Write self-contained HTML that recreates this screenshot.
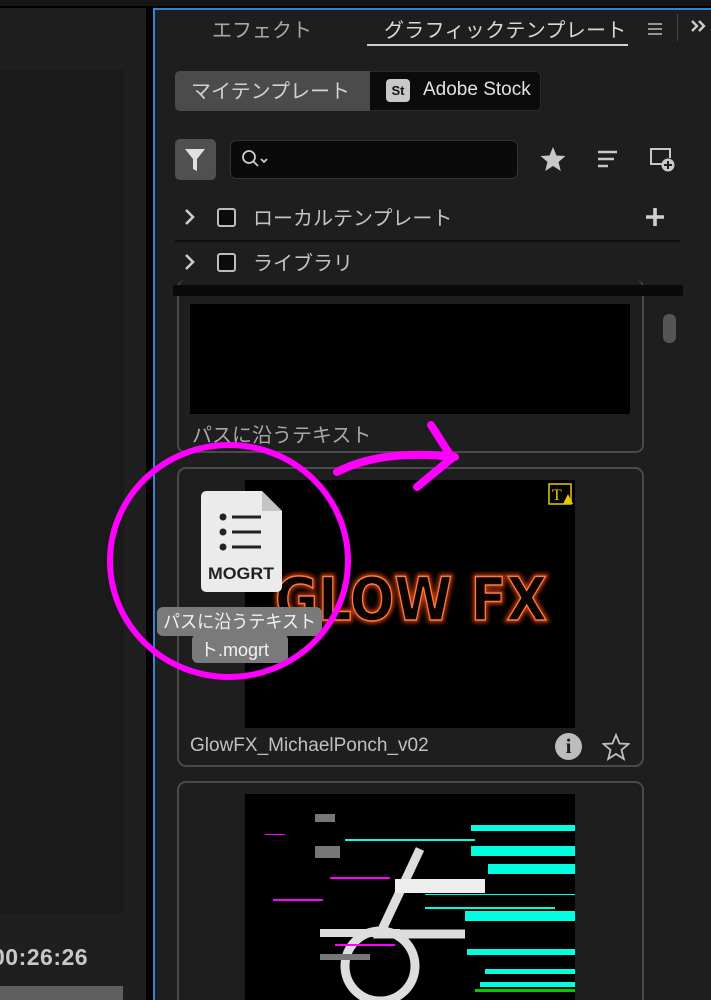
<!DOCTYPE html>
<html><head><meta charset="utf-8"><style>
*{margin:0;padding:0;box-sizing:border-box}
html{width:711px;height:1000px;overflow:hidden}
body{width:711px;height:1000px;overflow:hidden;background:#1f1f1f;position:relative;font-family:"Liberation Sans","Noto Sans CJK JP",sans-serif;color:#cfcfcf}
.a{position:absolute}
.jp{font-family:"Noto Sans CJK JP","Liberation Sans",sans-serif}
</style></head><body>
<div class="a" style="left:0;top:0;width:711px;height:6px;background:#161616"></div>
<div class="a" style="left:0;top:6px;width:711px;height:2px;background:#000"></div>
<div class="a" style="left:0;top:70px;width:124px;height:843px;background:#1a1a1a"></div>
<div class="a" style="left:-8px;top:944px;font-size:23px;font-weight:bold;color:#c8c8c8;letter-spacing:0.5px">00:26:26</div>
<div class="a" style="left:0;top:986px;width:123px;height:14px;background:#5e5e5e"></div>
<div class="a" style="left:146px;top:8px;width:7px;height:992px;background:#000"></div>
<div class="a" style="left:153px;top:8px;width:558px;height:992px;background:#1e1e1e;border-left:2px solid #2f86d8;border-top:2px solid #2f86d8"></div>
<div class="a jp" style="left:212px;top:14px;font-size:20px;color:#a8a8a8">エフェクト</div>
<div class="a jp" style="left:384px;top:14px;font-size:20px;color:#d8d8d8;letter-spacing:0.3px">グラフィックテンプレート</div>
<div class="a" style="left:367px;top:44px;width:261px;height:2px;background:#d0d0d0"></div>
<svg class="a" style="left:647px;top:22px" width="16" height="14"><path d="M1 2H15M1 7H15M1 12H15" stroke="#bbb" stroke-width="1.6"/></svg>
<div class="a" style="left:677px;top:14px;width:1px;height:27px;background:#444"></div>
<svg class="a" style="left:690px;top:18px" width="21" height="16"><path d="M2 3L7 8L2 13M9 3L14 8L9 13" stroke="#ccc" stroke-width="2.4" fill="none"/></svg>
<div class="a" style="left:175px;top:71px;width:366px;height:40px;background:#0b0b0b;border-radius:5px;border:1px solid #2a2a2a"></div>
<div class="a jp" style="left:175px;top:71px;width:195px;height:40px;background:#4b4b4b;border-radius:5px 0 0 5px;font-size:20px;color:#d2d2d2;line-height:38px;padding-left:16px">マイテンプレート</div>
<div class="a" style="left:386px;top:79px;width:24px;height:23px;background:#c8c8c8;border-radius:4px;color:#111;font-weight:bold;font-size:13px;line-height:23px;text-align:center">St</div>
<div class="a" style="left:423px;top:79px;font-size:19px;color:#e2e2e2">Adobe Stock</div>
<div class="a" style="left:175px;top:139px;width:41px;height:41px;background:#505050;border-radius:5px"></div>
<svg class="a" style="left:183px;top:147px" width="24" height="26"><path d="M2 2H22L14 12V24L10 22V12Z" fill="#e0e0e0"/></svg>
<div class="a" style="left:230px;top:140px;width:288px;height:39px;background:#0a0a0a;border:1px solid #333;border-radius:6px"></div>
<svg class="a" style="left:240px;top:148px" width="32" height="22"><circle cx="9" cy="9" r="6" stroke="#ccc" stroke-width="1.8" fill="none"/><path d="M13 13L18 18M21 11L24 14L27 11" stroke="#ccc" stroke-width="1.8" fill="none"/></svg>
<svg class="a" style="left:539px;top:145px" width="28" height="28"><path d="M14 2L17.5 10.5L26.5 11L19.5 17L21.8 26L14 21L6.2 26L8.5 17L1.5 11L10.5 10.5Z" fill="#c8c8c8"/></svg>
<svg class="a" style="left:596px;top:149px" width="24" height="22"><path d="M2 3H21M2 10H18M2 17H12" stroke="#c8c8c8" stroke-width="2.6"/></svg>
<svg class="a" style="left:648px;top:146px" width="30" height="30"><path d="M15 18H3V3H22V12" stroke="#c8c8c8" stroke-width="2" fill="none"/><circle cx="20" cy="19" r="6.5" fill="#c8c8c8"/><path d="M20 15V23M16 19H24" stroke="#1e1e1e" stroke-width="2"/></svg>
<svg class="a" style="left:183px;top:207px" width="14" height="20"><path d="M3 3L10 10L3 17" stroke="#ccc" stroke-width="2.6" fill="none"/></svg>
<div class="a" style="left:217px;top:208px;width:19px;height:19px;border:2.5px solid #bdbdbd;border-radius:3px;background:#0b0b0b"></div>
<div class="a jp" style="left:253px;top:202px;font-size:20px;color:#c4c4c4">ローカルテンプレート</div>
<svg class="a" style="left:645px;top:207px" width="20" height="20"><path d="M10 1V19M1 10H19" stroke="#d0d0d0" stroke-width="3.6"/></svg>
<div class="a" style="left:175px;top:240px;width:505px;height:2px;background:#0e0e0e"></div>
<svg class="a" style="left:183px;top:252px" width="14" height="20"><path d="M3 3L10 10L3 17" stroke="#ccc" stroke-width="2.6" fill="none"/></svg>
<div class="a" style="left:217px;top:253px;width:19px;height:19px;border:2.5px solid #bdbdbd;border-radius:3px;background:#0b0b0b"></div>
<div class="a jp" style="left:253px;top:247px;font-size:20px;color:#c4c4c4">ライブラリ</div>
<div class="a" style="left:177px;top:280px;width:467px;height:173px;border:2px solid #4a4a4a;border-radius:8px;border-top:none"></div>
<div class="a" style="left:173px;top:285px;width:510px;height:11px;background:#0a0a0a"></div>
<div class="a" style="left:190px;top:304px;width:440px;height:110px;background:#000"></div>
<div class="a jp" style="left:192px;top:419px;font-size:20px;color:#a8a8a8">パスに沿うテキスト</div>
<div class="a" style="left:663px;top:314px;width:13px;height:29px;background:#555;border-radius:6px"></div>
<div class="a" style="left:177px;top:467px;width:467px;height:300px;border:2px solid #4a4a4a;border-radius:9px"></div>
<div class="a" style="left:245px;top:480px;width:330px;height:248px;background:#000"></div>
<svg class="a" style="left:245px;top:480px" width="330" height="248">
<defs><filter id="g" x="-20%" y="-50%" width="140%" height="200%"><feGaussianBlur stdDeviation="2"/></filter></defs>
<text x="30" y="140" font-family="DejaVu Sans" font-weight="bold" font-size="60" textLength="272" lengthAdjust="spacingAndGlyphs" fill="none" stroke="#c83a08" stroke-width="5" filter="url(#g)">GLOW FX</text>
<text x="30" y="140" font-family="DejaVu Sans" font-weight="bold" font-size="60" textLength="272" lengthAdjust="spacingAndGlyphs" fill="#0a0200" stroke="#ff7a40" stroke-width="1.5">GLOW FX</text>
<rect x="304" y="4" width="22" height="20" fill="none" stroke="#e8c800" stroke-width="1.5"/>
<text x="307" y="20" font-family="Liberation Serif" font-size="16" fill="#e8c800">T</text>
<path d="M318 24L323 14L328 24Z" fill="#e8c800"/>
</svg>
<div class="a" style="left:190px;top:735px;font-size:19px;color:#c0c0c0">GlowFX_MichaelPonch_v02</div>
<div class="a" style="left:555px;top:733px;width:27px;height:27px;border-radius:50%;background:#bdbdbd;color:#1e1e1e;font-family:'Liberation Serif',serif;font-weight:bold;font-size:21px;text-align:center;line-height:27px">i</div>
<svg class="a" style="left:602px;top:733px" width="28" height="28"><path d="M14 2L17.5 10.5L26.5 11L19.5 17L21.8 26L14 21L6.2 26L8.5 17L1.5 11L10.5 10.5Z" fill="none" stroke="#c0c0c0" stroke-width="1.8"/></svg>
<div class="a" style="left:177px;top:781px;width:467px;height:219px;border:2px solid #4a4a4a;border-bottom:none;border-radius:9px 9px 0 0"></div>
<div class="a" style="left:245px;top:794px;width:330px;height:206px;background:#000;overflow:hidden">
<svg width="330" height="206">
<rect x="226" y="31" width="104" height="6" fill="#00ffe0"/><rect x="226" y="52" width="104" height="10" fill="#00ffe0"/><rect x="243" y="70" width="87" height="10" fill="#00ffe0"/><rect x="220" y="117" width="110" height="10" fill="#00ffe0"/><rect x="222" y="155" width="108" height="6" fill="#00ffe0"/><rect x="240" y="175" width="90" height="5" fill="#00ffe0"/><rect x="235" y="188" width="95" height="5" fill="#00ffe0"/>
<rect x="180" y="113" width="130" height="2" fill="#00ffe0"/><rect x="180" y="100" width="150" height="1" fill="#00ffe0"/>
<rect x="100" y="45" width="130" height="2" fill="#00ffe0"/>
<path d="M175 55L135 140H220" stroke="#ddd" stroke-width="9" fill="none"/>
<circle cx="135" cy="172" r="35" stroke="#ddd" stroke-width="9" fill="none"/>
<rect x="150" y="85" width="90" height="14" fill="#eee"/><rect x="75" y="135" width="80" height="8" fill="#ddd"/><rect x="75" y="160" width="50" height="6" fill="#777"/>
<rect x="70" y="52" width="25" height="12" fill="#777"/><rect x="70" y="20" width="20" height="8" fill="#777"/>
<rect x="20" y="40" width="20" height="1" fill="#f0f"/><rect x="28" y="105" width="50" height="2" fill="#f0f"/><rect x="85" y="83" width="60" height="2" fill="#f0f"/><rect x="90" y="150" width="60" height="2" fill="#f0f"/>
<rect x="230" y="195" width="100" height="3" fill="#0c0"/>
</svg></div>
<svg class="a" style="left:0;top:0" width="711" height="1000">
<path d="M337 472C370 455 410 452 455 457" stroke="#ff00ff" stroke-width="8" fill="none" stroke-linecap="round"/>
<path d="M431 425L452 458L417 487" stroke="#ff00ff" stroke-width="8" fill="none" stroke-linecap="round" stroke-linejoin="round"/>
<path d="M207 491H262L282 511V586Q282 592 276 592H207Q201 592 201 586V497Q201 491 207 491Z" fill="#ebebeb"/>
<path d="M262 491L282 511H262Z" fill="#c4c4c4"/>
<circle cx="223" cy="517" r="3.5" fill="#222"/><circle cx="223" cy="532" r="3.5" fill="#222"/><circle cx="223" cy="547" r="3.5" fill="#222"/>
<path d="M232 517H261M232 532H261M232 547H261" stroke="#222" stroke-width="3"/>
<text x="208" y="579" font-family="Liberation Sans" font-weight="bold" font-size="17" fill="#222" textLength="66" lengthAdjust="spacingAndGlyphs">MOGRT</text>
<rect x="157" y="607" width="165" height="29" rx="6" fill="#7a7a7a"/>
<rect x="192" y="634" width="96" height="29" rx="6" fill="#7a7a7a"/>
<text x="163" y="628" font-family="Noto Sans CJK JP" font-size="18" fill="#f2f2f2" textLength="153" lengthAdjust="spacingAndGlyphs">パスに沿うテキスト</text>
<text x="200" y="656" font-family="Liberation Sans,Noto Sans CJK JP" font-size="18" fill="#f2f2f2">ト.mogrt</text>
<ellipse cx="229" cy="561" rx="119" ry="116" stroke="#ff00ff" stroke-width="6" fill="none"/>
</svg>
</body></html>
